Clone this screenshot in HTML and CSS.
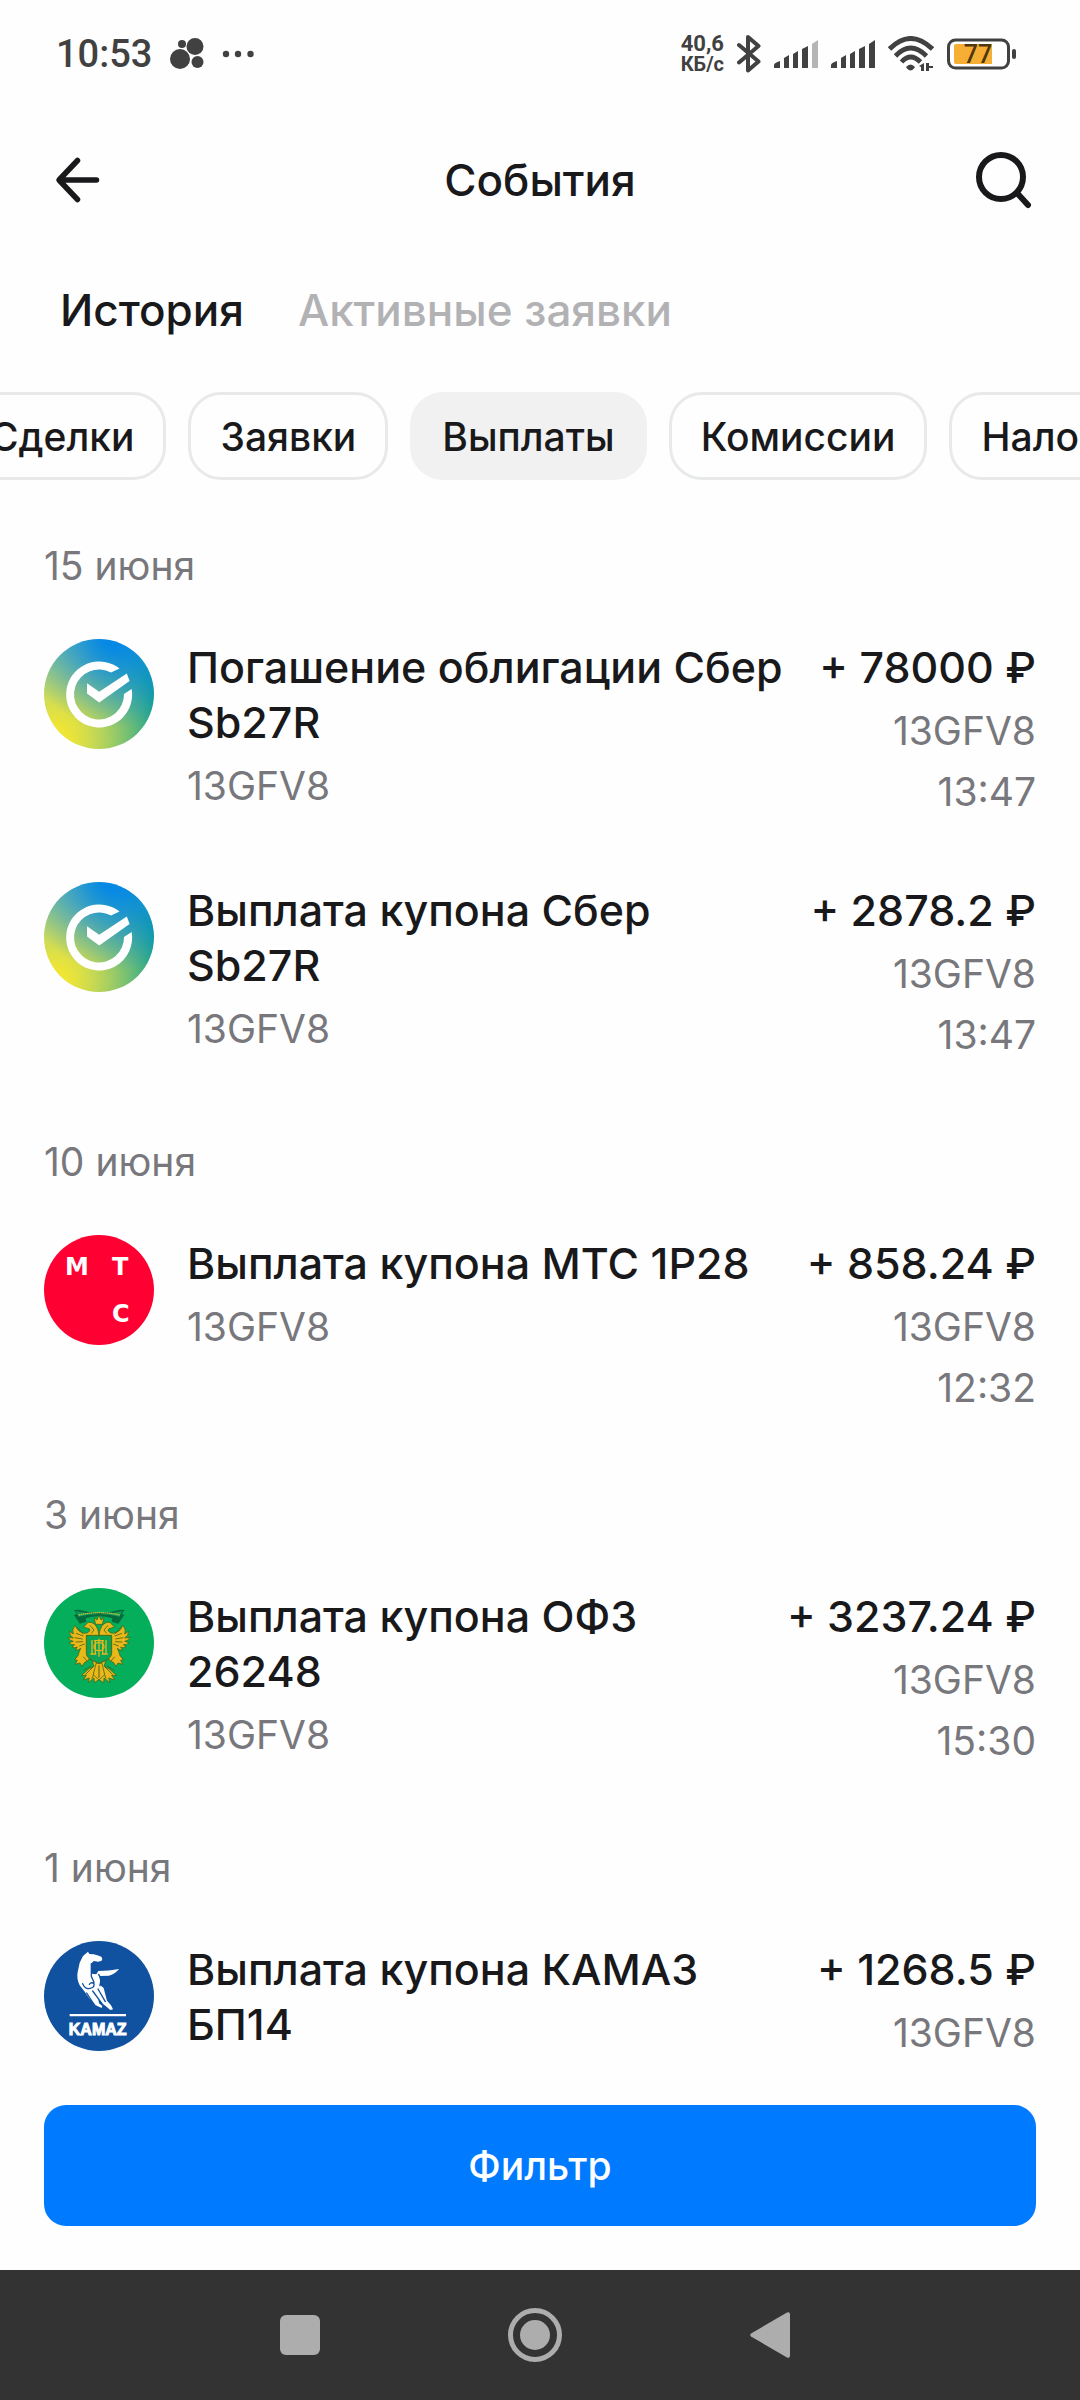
FILE: index.html
```html
<!DOCTYPE html>
<html lang="ru">
<head>
<meta charset="utf-8">
<meta name="viewport" content="width=device-width, initial-scale=1">
<title>События</title>
<link rel="stylesheet" href="styles.css">
</head>
<body>
<svg class="defs" width="0" height="0" aria-hidden="true">
  <symbol id="sber" viewBox="0 0 110 110">
    <path d="M75.5 29.5A33 33 0 1 0 87.7 50L80 55A25 25 0 1 1 67 33.5z"/>
    <path d="M43 44.3 55.2 52.8 82.8 34.5 85.6 42 55.2 63.5 43 54.5z"/>
  </symbol>
</svg>

<div class="status">
  <div class="status-side">
    <span class="clock">10:53</span>
    <svg class="ink" width="34" height="32" viewBox="0 0 34 32"><circle cx="10" cy="21" r="10"/><circle cx="25" cy="8.500" r="8.500"/><circle cx="12" cy="6" r="4"/><circle cx="27.500" cy="24" r="6"/></svg>
    <svg class="ink" width="32" height="8" viewBox="0 0 32 8"><circle cx="4" cy="4" r="3.200"/><circle cx="16" cy="4" r="3.200"/><circle cx="28.500" cy="4" r="3.200"/></svg>
  </div>
  <div class="status-side status-right">
    <div class="speed"><span class="speed-value">40,6</span><span class="speed-unit">КБ/с</span></div>
    <svg width="24" height="38" viewBox="0 0 24 38" fill="none" stroke="#414141" stroke-width="4" stroke-linejoin="round" stroke-linecap="round"><path d="M2 10 21.500 26.500 11 35.500V2L21.500 11 2 27.500"/></svg>
    <svg class="ink" width="44" height="28" viewBox="0 0 44 28"><path d="M0 28v-3q0-2 6-4v7zM10 28V18l5-3v13zM19 28V14l5-3v17zM28 28V9l6-3v22z"/><path fill="#b5b5b5" d="M38 28V4l6-4v28z"/></svg>
    <svg class="ink" width="44" height="28" viewBox="0 0 44 28"><path d="M0 28v-3q0-2 6-4v7zM10 28V18l5-3v13zM19 28V14l5-3v17zM28 28V9l6-3v22zM38 28V4l6-4v28z"/></svg>
    <svg width="46" height="36" viewBox="0 0 46 36" fill="none" stroke="#414141" stroke-width="4.800"><path d="M1.500 13Q22.500-8 44.500 13M7.500 20Q22.500 4 38.500 20M13.500 26Q22.500 16 32.500 26"/><path fill="#414141" stroke="none" d="M18 31q4.500-5 9 0l-1 1.500q-3.500 4-7 0zM31 30l5-3v8h-3v-4zM38 27h3v3h4v2h-4v3h-3z"/></svg>
    <svg width="69" height="32" viewBox="0 0 69 32"><rect x="1.500" y="2" width="60" height="28" rx="7" fill="none" stroke="#414141" stroke-width="3"/><path fill="#f7ae35" d="M9 6h36v20H9q-2 0-2-2V8q0-2 2-2z"/><rect x="65" y="11" width="4" height="10" rx="2" fill="#414141"/><text class="battery-text" x="31" y="25" text-anchor="middle">77</text></svg>
  </div>
</div>

<header class="header">
  <button class="icon-button" aria-label="Назад"><svg width="48" height="48" viewBox="0 0 48 48" fill="none" stroke="#19191b" stroke-width="5.500" stroke-linecap="round" stroke-linejoin="round"><path d="M23.500 4.500 5 24l18.500 19.500M6 24h36.500"/></svg></button>
  <h1 class="title">События</h1>
  <button class="icon-button" aria-label="Поиск"><svg width="60" height="60" viewBox="0 0 60 60" fill="none" stroke="#19191b" stroke-width="6" stroke-linecap="round"><circle cx="29" cy="27" r="22"/><path d="m45 43 11 12"/></svg></button>
</header>

<nav class="tabs">
  <button class="tab tab-active">История</button>
  <button class="tab">Активные заявки</button>
</nav>

<div class="chips">
  <button class="chip">Сделки</button>
  <button class="chip">Заявки</button>
  <button class="chip chip-active">Выплаты</button>
  <button class="chip">Комиссии</button>
  <button class="chip">Налоги</button>
</div>

<main class="list">
  <section class="day">
    <h2 class="date">15 июня</h2>
    <article class="row">
      <svg class="logo logo-sber" fill="#fff"><use href="#sber"/></svg>
      <div class="info"><h3 class="name">Погашение облигации Сбер Sb27R</h3><p class="meta">13GFV8</p></div>
      <div class="sum"><p class="amount">+ 78000 ₽</p><p class="meta">13GFV8</p><p class="meta">13:47</p></div>
    </article>
    <article class="row">
      <svg class="logo logo-sber" fill="#fff"><use href="#sber"/></svg>
      <div class="info"><h3 class="name">Выплата купона Сбер Sb27R</h3><p class="meta">13GFV8</p></div>
      <div class="sum"><p class="amount">+ 2878.2 ₽</p><p class="meta">13GFV8</p><p class="meta">13:47</p></div>
    </article>
  </section>

  <section class="day">
    <h2 class="date">10 июня</h2>
    <article class="row">
      <svg class="logo logo-mts" viewBox="0 0 110 110"><text x="21" y="40">М</text><text x="68" y="40">Т</text><text x="68" y="87">С</text></svg>
      <div class="info"><h3 class="name">Выплата купона МТС 1P28</h3><p class="meta">13GFV8</p></div>
      <div class="sum"><p class="amount">+ 858.24 ₽</p><p class="meta">13GFV8</p><p class="meta">12:32</p></div>
    </article>
  </section>

  <section class="day">
    <h2 class="date">3 июня</h2>
    <article class="row">
      <svg class="logo logo-ofz" viewBox="42 54 330 330">
        <path fill="#046b3c" d="M132 120l14-1q62 18 124 0l14 1-9 12 8 3-18 26-20-6 2-10q-40-12-80 0l2 10-20 6-17-26 9-3z"/>
        <path fill="#0d9c58" d="M138 123q69 20 138 0l-7 17q-61-14-124 0z"/>
        <path fill="none" stroke="#d9c545" stroke-width="4" stroke-dasharray="4 2" d="M146 135q62-14 124 0"/>
        <g id="half">
          <path fill="#e9b81b" stroke="#3f5a16" stroke-width="2" d="M206 190q-4-26-20-32-14-4-18 6l-8 6 10 4q10 0 10 8-6 8-16 8-22-4-28-24-12 12-6 26l-12-8q0 12 12 20l-16-2q4 10 16 12l-13 4q6 8 17 6l-8 7q8 4 16 0l-6 10q10 0 16-6-6 14-8 22l-10 12 8 2-6 12 14-4 6 10 8-12q12-2 16-16 10 16 12 28l-16 8-22 20 15-1-9 14 18-6-4 14 18-14 1 14 15-10z"/>
          <path fill="none" stroke="#4c6418" stroke-width="2.500" d="M138 190l22 8M134 203l24 4M137 216l22-1M148 228l16-6M142 172l18 21M180 166l12 14-8 10M160 260l12 14M190 290l-24 24M198 292l-12 34M182 288l-22 14"/>
        </g>
        <use href="#half" transform="matrix(-1 0 0 1 414 0)"/>
        <path fill="#e9b81b" stroke="#3f5a16" stroke-width="2" d="M197 163l-5-20 9 7 6-14 6 14 9-7-5 20zM198 280h18l8 34-17 16-17-16z"/>
        <path stroke="#4c6418" stroke-width="3" d="M207 286v38"/>
        <path fill="#0aa457" stroke="#4a6a12" stroke-width="3" d="M169 196h76v54q0 18-38 30-38-12-38-30z"/>
        <path fill="none" stroke="#e3b91c" stroke-width="4" d="M186 210v44M196 210v44M218 210v44M228 210v44M181 252h18M215 252h18M207 206v54M192 212h30"/><ellipse cx="207" cy="230" rx="15" ry="12" fill="none" stroke="#e3b91c" stroke-width="4"/>
      </svg>
      <div class="info"><h3 class="name">Выплата купона ОФЗ 26248</h3><p class="meta">13GFV8</p></div>
      <div class="sum"><p class="amount">+ 3237.24 ₽</p><p class="meta">13GFV8</p><p class="meta">15:30</p></div>
    </article>
  </section>

  <section class="day">
    <h2 class="date">1 июня</h2>
    <article class="row">
      <svg class="logo logo-kamaz" viewBox="42 48 330 330">
        <path fill="#fff" d="M174 80l4 7q14 0 24 4l12 4q5 6 1 12l-10 3-14-2-8 8 2 30 14 2 6-10q32 0 62-6-10 14-30 20l-26 1-6-2q8 12 4 28l12 10 4 16 6 22 12 14 6 12-8 2-14-12-8-6-14-14 2 12 10 8-2 6-18-8-20-22-14-20-14-18q-10-20-6-40l6-28 10-20z"/>
        <path fill="none" stroke="#1052a0" stroke-width="4" stroke-linecap="round" d="M158 176q8 18 22 14 14-2 12-14-8-6-14 2M184 116v38l8 18M206 148q10 12 4 34M170 204l22 34M188 198l28 38M204 192l22 38"/>
        <path fill="#fff" d="M119 267h169v7H119z"/>
        <text x="203" y="330" text-anchor="middle">KAMAZ</text>
      </svg>
      <div class="info"><h3 class="name">Выплата купона КАМАЗ БП14</h3></div>
      <div class="sum"><p class="amount">+ 1268.5 ₽</p><p class="meta">13GFV8</p></div>
    </article>
  </section>
</main>

<footer class="footer"><button class="filter">Фильтр</button></footer>

<nav class="system">
  <button class="system-button" aria-label="Недавние"><svg width="56" height="56" viewBox="0 0 56 56"><rect x="8" y="8" width="40" height="40" rx="6"/></svg></button>
  <button class="system-button" aria-label="Домой"><svg width="56" height="56" viewBox="0 0 56 56"><circle cx="28" cy="28" r="24.500" fill="none" stroke="#adadad" stroke-width="5"/><circle cx="28" cy="28" r="15"/></svg></button>
  <button class="system-button" aria-label="Назад"><svg width="56" height="56" viewBox="0 0 56 56"><path d="M9 26.500 45 5.500q3-1 3 2v41q0 3-3 2L9 29.500q-1.500-1.500 0-3z"/></svg></button>
</nav>
</body>
</html>
```
FILE: styles.css
```css
* {
  box-sizing: border-box;
}

body {
  display: flex;
  flex-direction: column;
  height: 100vh;
  margin: 0;
  overflow: hidden;
  background: #fefefe;
  color: #19191b;
  font-family: Inter, "Noto Sans", sans-serif;
  font-size: 44px;
  line-height: 55px;
}

h1, h2, h3, p {
  margin: 0;
  font: inherit;
}

button {
  padding: 0;
  border: 0;
  background: none;
  color: inherit;
  font: inherit;
  font-weight: 500;
}

svg {
  display: block;
  flex: none;
}

.defs {
  position: absolute;
}

/* Status bar */
.status {
  display: flex;
  flex: none;
  justify-content: space-between;
  height: 108px;
  padding: 0 64px 0 56px;
  color: #414141;
  font-family: Roboto, sans-serif;
}

.status-side {
  display: flex;
  align-items: center;
  gap: 18px;
}

.status-right {
  gap: 13px;
}

.clock {
  font-size: 38px;
  font-weight: 500;
}

.ink {
  fill: #414141;
}

.speed {
  display: grid;
  font-weight: 700;
  line-height: 20px;
}

.speed-value {
  font-size: 22px;
}

.speed-unit {
  font-size: 20px;
}

.battery-text {
  fill: #4d3610;
  font-size: 25px;
  font-weight: 500;
}

/* Header */
.header {
  display: flex;
  flex: none;
  align-items: center;
  justify-content: space-between;
  height: 144px;
  padding: 0 48px;
}

.icon-button {
  display: flex;
  justify-content: center;
  width: 60px;
}

.title {
  font-weight: 500;
}

/* Tabs */
.tabs {
  display: flex;
  flex: none;
  gap: 54px;
  padding: 31px 60px 54px;
}

.tab {
  color: #b2b2b5;
}

.tab-active {
  color: inherit;
}

/* Category chips; the strip is scrolled a little to the right */
.chips {
  display: flex;
  flex: none;
  gap: 22px;
  margin-left: -42px;
  overflow: hidden;
}

.chip {
  flex: none;
  height: 88px;
  padding: 0 29px;
  border: 3px solid #e8e9e9;
  border-radius: 33px;
  font-size: 39px;
}

.chip-active {
  border-color: #f1f1f1;
  background: #f1f1f1;
}

/* Events */
.list {
  display: flex;
  flex: 1;
  flex-direction: column;
  gap: 77px;
  min-height: 0;
  padding: 61px 44px 0;
  overflow: hidden;
}

.date {
  margin-bottom: 48px;
}

.date, .meta {
  color: #77777c;
  font-size: 39px;
  line-height: 50px;
}

.row {
  display: flex;
}

.row + .row {
  margin-top: 65px;
}

.info {
  flex: 1;
  margin: 0 22px 0 33px;
}

.info, .sum {
  padding-top: 1px;
}

.name, .amount {
  font-size: 43px;
  font-weight: 500;
}

.meta {
  margin-top: 11px;
}

.sum {
  text-align: right;
  white-space: nowrap;
}

.logo {
  width: 110px;
  height: 110px;
  border-radius: 50%;
}

.logo-sber {
  background:
    radial-gradient(circle at 65% -5%, #0689e4 10%, rgba(6, 137, 228, 0) 70%),
    radial-gradient(circle at 8% 92%, #efe534 10%, rgba(239, 229, 52, 0) 78%),
    linear-gradient(100deg, #7fc5a8, #7fc5a8 30%, #0d9e93 95%);
}

.logo-mts {
  background: #ff0032;
  fill: #fff;
  font: 700 24px "DejaVu Sans", sans-serif;
}

.logo-ofz {
  background: #04ae5b;
}

.logo-kamaz {
  background: #1052a0;
  fill: #fff;
  stroke-width: 3px;
  font: 700 48px "Liberation Sans", sans-serif;
}

.logo-kamaz text {
  stroke: #fff;
}

/* Footer */
.footer {
  flex: none;
  padding: 44px;
}

.filter {
  display: block;
  width: 100%;
  height: 121px;
  border-radius: 22px;
  background: #007aff;
  color: #fff;
  font-size: 39px;
}

.system {
  display: flex;
  flex: none;
  align-items: center;
  justify-content: center;
  gap: 179px;
  height: 130px;
  padding-right: 10px;
  background: #333;
}

.system-button {
  fill: #adadad;
}
```
